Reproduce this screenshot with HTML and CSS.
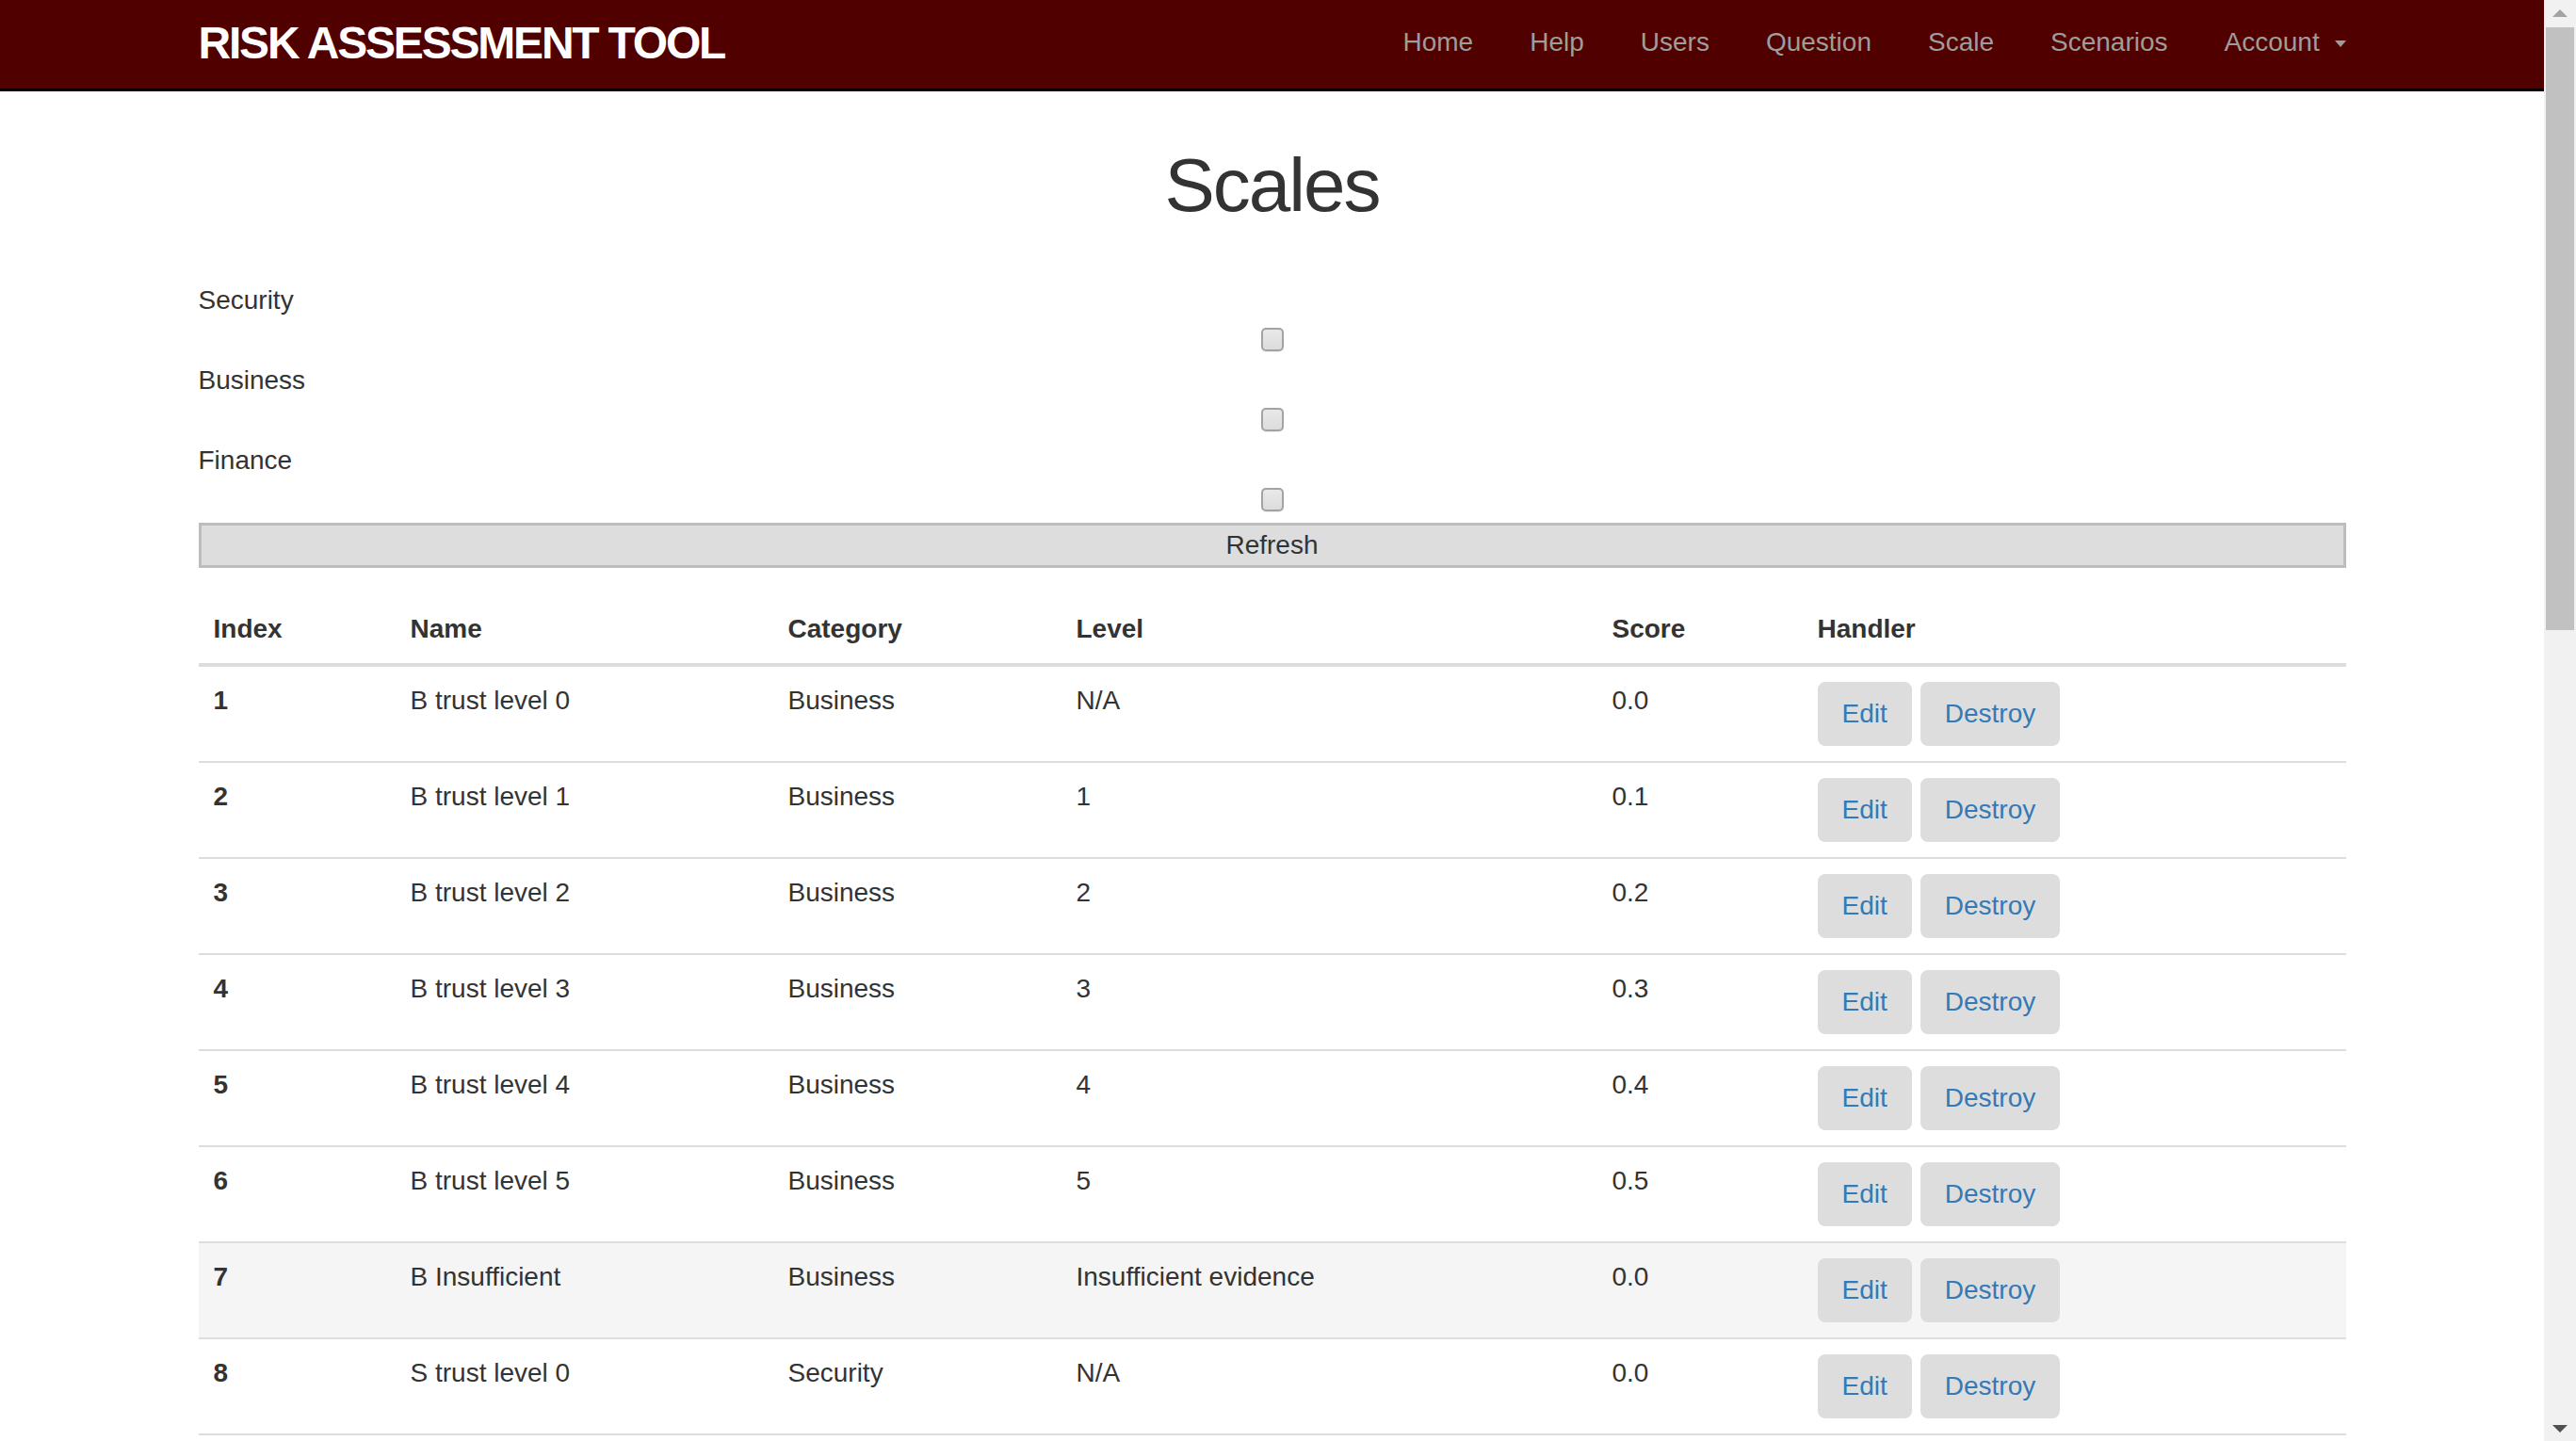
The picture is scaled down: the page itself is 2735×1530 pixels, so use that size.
FILE: index.html
```html
<!DOCTYPE html>
<html lang="en">
<head>
<meta charset="utf-8">
<title>Scales - Risk Assessment Tool</title>
<link rel="stylesheet" href="styles.css">
</head>
<body>
<div class="window">
  <div class="viewport">
    <nav class="navbar">
      <div class="container nav-inner">
        <a class="brand" href="#">RISK ASSESSMENT TOOL</a>
        <ul class="nav-links">
          <li><a href="#">Home</a></li>
          <li><a href="#">Help</a></li>
          <li><a href="#">Users</a></li>
          <li><a href="#">Question</a></li>
          <li><a href="#">Scale</a></li>
          <li><a href="#">Scenarios</a></li>
          <li><a href="#">Account <span class="caret"></span></a></li>
        </ul>
      </div>
    </nav>

    <main class="container">
      <h1 class="page-title">Scales</h1>

      <form class="filter">
        <label class="filter-label" for="f-security">Security</label>
        <div class="filter-check"><input type="checkbox" id="f-security"></div>
        <label class="filter-label" for="f-business">Business</label>
        <div class="filter-check"><input type="checkbox" id="f-business"></div>
        <label class="filter-label" for="f-finance">Finance</label>
        <div class="filter-check"><input type="checkbox" id="f-finance"></div>
        <button type="button" class="refresh">Refresh</button>
      </form>

      <table class="scales">
        <colgroup>
          <col class="c-index">
          <col class="c-name">
          <col class="c-cat">
          <col class="c-level">
          <col class="c-score">
          <col class="c-handler">
        </colgroup>
        <thead>
          <tr><th>Index</th><th>Name</th><th>Category</th><th>Level</th><th>Score</th><th>Handler</th></tr>
        </thead>
        <tbody>
          <tr><td class="idx">1</td><td>B trust level 0</td><td>Business</td><td>N/A</td><td>0.0</td><td><div class="actions"><a class="btn" href="#">Edit</a><a class="btn" href="#">Destroy</a></div></td></tr>
          <tr><td class="idx">2</td><td>B trust level 1</td><td>Business</td><td>1</td><td>0.1</td><td><div class="actions"><a class="btn" href="#">Edit</a><a class="btn" href="#">Destroy</a></div></td></tr>
          <tr><td class="idx">3</td><td>B trust level 2</td><td>Business</td><td>2</td><td>0.2</td><td><div class="actions"><a class="btn" href="#">Edit</a><a class="btn" href="#">Destroy</a></div></td></tr>
          <tr><td class="idx">4</td><td>B trust level 3</td><td>Business</td><td>3</td><td>0.3</td><td><div class="actions"><a class="btn" href="#">Edit</a><a class="btn" href="#">Destroy</a></div></td></tr>
          <tr><td class="idx">5</td><td>B trust level 4</td><td>Business</td><td>4</td><td>0.4</td><td><div class="actions"><a class="btn" href="#">Edit</a><a class="btn" href="#">Destroy</a></div></td></tr>
          <tr><td class="idx">6</td><td>B trust level 5</td><td>Business</td><td>5</td><td>0.5</td><td><div class="actions"><a class="btn" href="#">Edit</a><a class="btn" href="#">Destroy</a></div></td></tr>
          <tr class="hover"><td class="idx">7</td><td>B Insufficient</td><td>Business</td><td>Insufficient evidence</td><td>0.0</td><td><div class="actions"><a class="btn" href="#">Edit</a><a class="btn" href="#">Destroy</a></div></td></tr>
          <tr><td class="idx">8</td><td>S trust level 0</td><td>Security</td><td>N/A</td><td>0.0</td><td><div class="actions"><a class="btn" href="#">Edit</a><a class="btn" href="#">Destroy</a></div></td></tr>
        </tbody>
      </table>
    </main>
  </div>

  <div class="scrollbar" aria-hidden="true">
    <div class="sb-btn">
      <svg width="16" height="8" viewBox="0 0 16 8"><polygon points="8,0 16,8 0,8" fill="#a3a3a3"/></svg>
    </div>
    <div class="sb-thumb"></div>
    <div class="sb-track"></div>
    <div class="sb-btn sb-down">
      <svg width="16" height="8" viewBox="0 0 16 8"><polygon points="0,0 16,0 8,8" fill="#505050"/></svg>
    </div>
  </div>
</div>
</body>
</html>
```

FILE: styles.css
```css
html, body {
  margin: 0;
  padding: 0;
  height: 1530px;
  overflow: hidden;
  background: #ffffff;
}

body {
  font-family: "Liberation Sans", Arial, Helvetica, sans-serif;
  font-size: 28px;
  line-height: 40px;
  color: #333333;
}

.window {
  display: flex;
  height: 1530px;
}

.viewport {
  flex: 1;
  min-width: 0;
  overflow: hidden;
}

.container {
  width: 2280px;
  margin: 0 auto;
}

/* Navbar */
.navbar {
  background: #510000;
  border-bottom: 3px solid #0c0000;
  height: 94px;
}

.nav-inner {
  display: flex;
  align-items: flex-start;
  justify-content: space-between;
  height: 94px;
}

.brand {
  display: block;
  margin-top: 18px;
  font-size: 48px;
  line-height: 56px;
  font-weight: bold;
  letter-spacing: -2.2px;
  color: #ffffff;
  text-decoration: none;
  white-space: nowrap;
}

.nav-links {
  display: flex;
  gap: 60px;
  list-style: none;
  margin: 25px 0 0 0;
  padding: 0;
}

.nav-links a {
  display: block;
  font-size: 28px;
  line-height: 40px;
  color: #9d9d9d;
  text-decoration: none;
  white-space: nowrap;
}

.caret {
  display: inline-block;
  width: 0;
  height: 0;
  margin-left: 8px;
  vertical-align: middle;
  border-top: 7px solid #9d9d9d;
  border-left: 6px solid transparent;
  border-right: 6px solid transparent;
}

/* Heading */
.page-title {
  margin: 55px 0 57px;
  font-size: 80px;
  line-height: 90px;
  font-weight: normal;
  letter-spacing: -2px;
  text-align: center;
  color: #333333;
}

/* Filter form */
.filter {
  display: flex;
  flex-direction: column;
}

.filter-label {
  display: block;
  font-size: 28px;
  line-height: 40px;
  color: #333333;
}

.filter-check {
  display: flex;
  justify-content: center;
  padding: 9px 0 11px;
}

.filter-check input {
  -webkit-appearance: none;
  appearance: none;
  box-sizing: border-box;
  width: 24px;
  height: 25px;
  margin: 0;
  border: 2px solid #a3a3a3;
  border-radius: 5px;
  background: linear-gradient(#e9e9e9, #dcdcdc);
  box-shadow: 0 1px 0 #ededed;
}

.refresh {
  box-sizing: border-box;
  display: block;
  width: 100%;
  height: 48px;
  margin-top: 1px;
  padding: 0;
  border: 3px solid #bdbdbd;
  background: #dddddd;
  font-family: "Liberation Sans", Arial, Helvetica, sans-serif;
  font-size: 28px;
  line-height: 42px;
  color: #333333;
  text-align: center;
}

/* Table */
.scales {
  width: 2280px;
  margin-top: 29px;
  border-collapse: collapse;
  border-spacing: 0;
  table-layout: fixed;
}

.c-index { width: 209px; }
.c-name { width: 401px; }
.c-cat { width: 306px; }
.c-level { width: 569px; }
.c-score { width: 218px; }
.c-handler { width: 577px; }

.scales th,
.scales td {
  padding: 16px;
  text-align: left;
  vertical-align: top;
  font-size: 28px;
  line-height: 40px;
}

.scales th {
  font-weight: bold;
  border-bottom: 4px solid #dddddd;
}

.scales td {
  border-top: 2px solid #dddddd;
}

.scales tbody tr:last-child td {
  border-bottom: 2px solid #dddddd;
}

.scales td.idx {
  font-weight: bold;
}

.scales tr.hover td {
  background: #f5f5f5;
}

.actions {
  display: flex;
  gap: 9px;
}

.btn {
  display: inline-block;
  padding: 12px 24px;
  border: 2px solid #dddddd;
  border-radius: 8px;
  background: #dddddd;
  color: #337ab7;
  font-size: 28px;
  line-height: 40px;
  text-decoration: none;
  white-space: nowrap;
}

/* Scrollbar */
.scrollbar {
  width: 34px;
  flex: none;
  display: flex;
  flex-direction: column;
  background: #f1f1f1;
}

.sb-btn {
  height: 29px;
  display: flex;
  justify-content: center;
  align-items: center;
  flex: none;
}

.sb-btn svg {
  display: block;
  margin-top: -1px;
}

.sb-thumb {
  height: 640px;
  margin: 0 2px;
  background: #c1c1c1;
  flex: none;
}

.sb-track {
  flex: 1;
}

.sb-down svg {
  margin-top: 2px;
}
```
